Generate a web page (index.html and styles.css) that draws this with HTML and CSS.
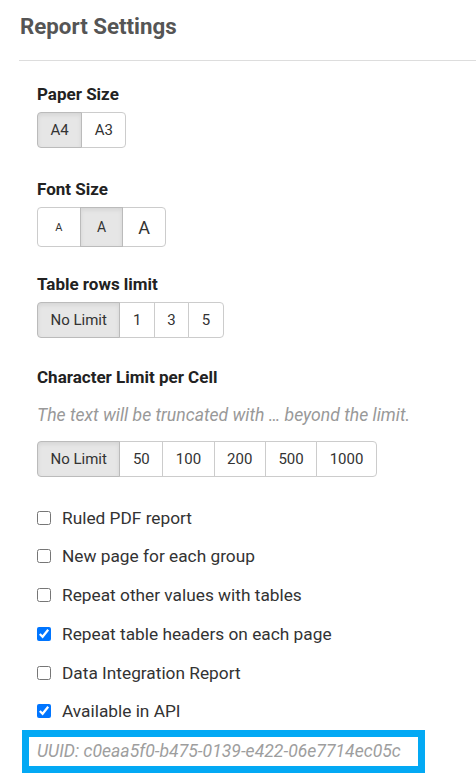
FILE: index.html
```html
<!DOCTYPE html>
<html lang="en">
<head>
  <meta charset="UTF-8">
  <title>Report Settings</title>
  <meta name="viewport" content="width=device-width, initial-scale=1.0">
  <link rel="stylesheet" href="styles.css">
</head>
<body>

  <h1 class="title">Report Settings</h1>
  <hr class="divider">

  <div class="settings">
    <div class="field paper">
      <label class="field-label">Paper Size</label>
      <div class="btn-group">
        <button class="btn active">A4</button>
        <button class="btn">A3</button>
      </div>
    </div>

    <div class="field fonts">
      <label class="field-label">Font Size</label>
      <div class="btn-group">
        <button class="btn font-btn sm">A</button>
        <button class="btn font-btn md active">A</button>
        <button class="btn font-btn lg">A</button>
      </div>
    </div>

    <div class="field">
      <label class="field-label">Table rows limit</label>
      <div class="btn-group">
        <button class="btn active">No Limit</button>
        <button class="btn">1</button>
        <button class="btn">3</button>
        <button class="btn">5</button>
      </div>
    </div>

    <div class="field chars">
      <label class="field-label">Character Limit per Cell</label>
      <p class="hint">The text will be truncated with … beyond the limit.</p>
      <div class="btn-group">
        <button class="btn active">No Limit</button>
        <button class="btn">50</button>
        <button class="btn">100</button>
        <button class="btn">200</button>
        <button class="btn">500</button>
        <button class="btn">1000</button>
      </div>
    </div>

    <div class="options">
      <label class="check"><input type="checkbox"> Ruled PDF report</label>
      <label class="check"><input type="checkbox"> New page for each group</label>
      <label class="check"><input type="checkbox"> Repeat other values with tables</label>
      <label class="check"><input type="checkbox" checked> Repeat table headers on each page</label>
      <label class="check"><input type="checkbox"> Data Integration Report</label>
      <label class="check"><input type="checkbox" checked> Available in API</label>
    </div>

    <div class="uuid">UUID: c0eaa5f0-b475-0139-e422-06e7714ec05c</div>
  </div>

</body>
</html>
```

FILE: styles.css
```css
:root {
  --text: #333;
  --label: #222;
  --muted: #999;
  --border: #ccc;
  --active: #e6e6e6;
  --highlight: #03a9f4;
}

body {
  margin: 0;
  font-family: Roboto, "Liberation Sans", sans-serif;
  color: var(--text);
  background: #fff;
  overflow: hidden;
}

.title {
  margin: 0;
  padding: 12px 0 0 20px;
  font-size: 22.3px;
  line-height: 28px;
  font-weight: bold;
  color: #555;
}

.divider {
  margin: 20px 0 0 19px;
  border: none;
  border-top: 1px solid #ddd;
}

.settings {
  padding: 23px 0 0 37px;
}

.field {
  margin-bottom: 29px;
}

.field.paper {
  margin-bottom: 31px;
}

.field.fonts {
  margin-bottom: 27px;
}

.field.chars {
  margin-bottom: 28px;
}

.field-label {
  display: block;
  font-size: 17px;
  line-height: 20px;
  font-weight: bold;
  color: var(--label);
  margin-bottom: 8px;
}

.hint {
  margin: 18px 0 16px;
  font-size: 17.6px;
  line-height: 20px;
  font-style: italic;
  color: var(--muted);
}

.btn-group {
  display: inline-flex;
}

.btn {
  height: 36px;
  padding: 0 12.5px;
  border: 1px solid var(--border);
  margin-left: -1px;
  background: #fff;
  color: var(--text);
  font-family: inherit;
  font-size: 15px;
  cursor: pointer;
}

.btn:first-child {
  margin-left: 0;
  border-radius: 4px 0 0 4px;
}

.btn:last-child {
  border-radius: 0 4px 4px 0;
}

.btn.active {
  background: var(--active);
  border-color: #bbb;
  box-shadow: inset 0 2px 4px rgba(0, 0, 0, 0.08);
  position: relative;
}

.font-btn {
  height: 40px;
  width: 43.7px;
  padding: 0;
}

.font-btn.sm { font-size: 11px; }
.font-btn.md { font-size: 14px; }
.font-btn.lg { font-size: 18px; }

.check {
  display: flex;
  align-items: center;
  gap: 11px;
  height: 25.5px;
  margin-bottom: 13.2px;
  font-size: 17.3px;
  color: var(--text);
}

.check input {
  width: 14px;
  height: 14px;
  margin: 0;
}

.uuid {
  margin: -7px 0 0 -15px;
  width: 381px;
  height: 29px;
  padding-left: 8px;
  border: 7px solid var(--highlight);
  font-size: 17.6px;
  line-height: 29px;
  font-style: italic;
  color: #9e9e9e;
  white-space: nowrap;
}
```
